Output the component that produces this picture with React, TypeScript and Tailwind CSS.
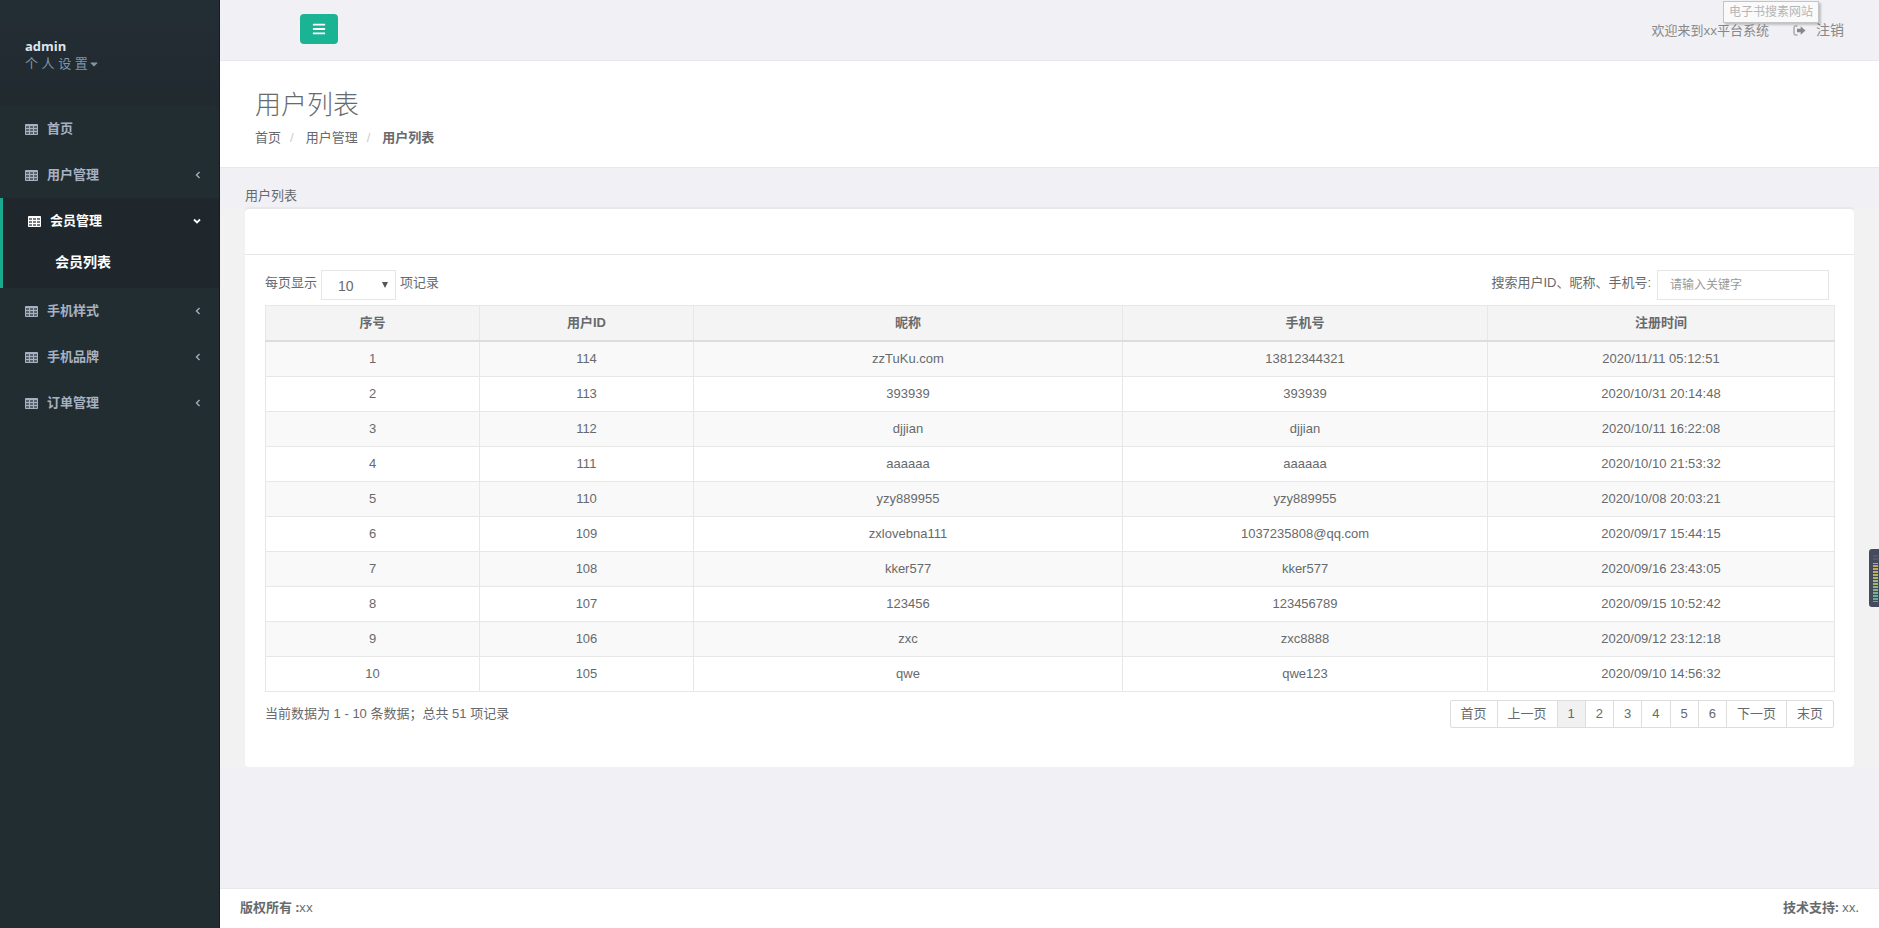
import { useState } from "react";
import { FaBars, FaCaretDown } from "react-icons/fa";

interface IMenuItem {
  name: string;
  arrow: boolean;
  children?: string[];
}

interface IUserRow {
  id: number;
  nickname: string;
  phone: string;
  created: string;
}

const menu: IMenuItem[] = [
  { name: "首页", arrow: false },
  { name: "用户管理", arrow: true },
  { name: "会员管理", arrow: true, children: ["会员列表"] },
  { name: "手机样式", arrow: true },
  { name: "手机品牌", arrow: true },
  { name: "订单管理", arrow: true },
];

const users: IUserRow[] = [
  { id: 114, nickname: "zzTuKu.com", phone: "13812344321", created: "2020/11/11 05:12:51" },
  { id: 113, nickname: "393939", phone: "393939", created: "2020/10/31 20:14:48" },
  { id: 112, nickname: "djjian", phone: "djjian", created: "2020/10/11 16:22:08" },
  { id: 111, nickname: "aaaaaa", phone: "aaaaaa", created: "2020/10/10 21:53:32" },
  { id: 110, nickname: "yzy889955", phone: "yzy889955", created: "2020/10/08 20:03:21" },
  { id: 109, nickname: "zxlovebna111", phone: "1037235808@qq.com", created: "2020/09/17 15:44:15" },
  { id: 108, nickname: "kker577", phone: "kker577", created: "2020/09/16 23:43:05" },
  { id: 107, nickname: "123456", phone: "123456789", created: "2020/09/15 10:52:42" },
  { id: 106, nickname: "zxc", phone: "zxc8888", created: "2020/09/12 23:12:18" },
  { id: 105, nickname: "qwe", phone: "qwe123", created: "2020/09/10 14:56:32" },
];

const pages = ["首页", "上一页", "1", "2", "3", "4", "5", "6", "下一页", "末页"];

const TableIcon = () => (
  <svg viewBox="0 0 13 11" className="h-[11px] w-[13px] shrink-0" fill="currentColor">
    <rect width="13" height="11" rx="1" opacity="0.4" />
    <path
      fillRule="evenodd"
      d="M1 0h11a1 1 0 0 1 1 1v9a1 1 0 0 1-1 1H1a1 1 0 0 1-1-1V1a1 1 0 0 1 1-1ZM1 2v2h3V2ZM5 2v2h3V2ZM9 2v2h3V2ZM1 5v2h3V5ZM5 5v2h3V5ZM9 5v2h3V5ZM1 8v2h3V8ZM5 8v2h3V8ZM9 8v2h3V8Z"
    />
  </svg>
);

const SignOutIcon = () => (
  <svg viewBox="0 0 13 11" className="h-[11px] w-[13px] shrink-0">
    <path d="M4.5 1H2.2A1.2 1.2 0 0 0 1 2.200V8.800A1.2 1.2 0 0 0 2.200 10H4.500" fill="none" stroke="currentColor" />
    <path d="M4 3.700h3.700V1.200L12.500 5.500 7.700 9.800V7.300H4Z" fill="currentColor" />
  </svg>
);

const Arrow = ({ open }: { open: boolean }) => (
  <svg viewBox="0 0 8 8" className="size-2 shrink-0" fill="none" stroke="currentColor" strokeWidth={open ? 1.8 : 1.3}>
    <path d={open ? "M1 2.500 4 5.500 7 2.500" : "M6.500 1 3.500 4 6.500 7"} />
  </svg>
);

const Sidebar = () => (
  <nav className="w-[220px] shrink-0 border-r border-[#141c21] bg-[#222d32] text-[#a7b1c2]">
    <div className="h-[106px] bg-linear-to-b from-[#232d34] to-[#202a2f] pt-[37px] pl-[25px]">
      <div className="font-['Open_Sans','Noto_Sans_CJK_SC',sans-serif] font-bold text-[#dfe4ed]">admin</div>
      <button type="button" className="flex cursor-pointer items-center text-[#8095a8]">
        个 人 设 置
        <FaCaretDown className="size-3" />
      </button>
    </div>
    <ul>
      {menu.map((m) => (
        <li key={m.name} className={m.children ? "border-l-3 border-[#19aa8d] bg-[#20272c] text-white" : ""}>
          <a href="#" className="flex h-[46px] items-center gap-[9px] pr-[18px] pl-[25px] font-bold">
            <TableIcon />
            <span className="flex-1">{m.name}</span>
            {m.arrow && <Arrow open={!!m.children} />}
          </a>
          {m.children && (
            <ul className="pb-2">
              {m.children.map((c) => (
                <li key={c}>
                  <a href="#" className="flex h-9 items-center pl-[52px] text-sm font-bold">
                    {c}
                  </a>
                </li>
              ))}
            </ul>
          )}
        </li>
      ))}
    </ul>
  </nav>
);

const TopBar = () => (
  <div className="relative flex h-[61px] items-start justify-between border-b border-[#e7e8ee] pr-[35px] pl-20">
    <button
      type="button"
      aria-label="menu"
      className="mt-[14px] flex h-[30px] w-[38px] cursor-pointer items-center justify-center rounded-sm bg-[#1ab394] text-white"
    >
      <FaBars className="size-[14px]" />
    </button>
    <div className="mt-[21px] flex items-center text-[#888888]">
      <span className="font-['Open_Sans','Noto_Sans_CJK_SC',sans-serif]">欢迎来到xx平台系统</span>
      <a href="#" className="ml-6 flex items-center gap-[10px] text-sm leading-[18px]">
        <SignOutIcon />
        注销
      </a>
    </div>
    <div className="absolute top-[1px] right-[60px] border border-[#c4c4c4] bg-[#fafafa] px-[5px] text-xs leading-5 text-[#b5b5b5] shadow-[2px_2px_2px_rgba(0,0,0,0.2)]">
      电子书搜素网站
    </div>
  </div>
);

const PageHeading = () => (
  <div className="border-b border-[#e7e8ee] bg-white px-[35px] pt-7 pb-5">
    <h2 className="text-[26px] leading-8 font-light">用户列表</h2>
    <ol className="mt-2 flex">
      <li>
        <a href="#">首页</a>
      </li>
      <li className="before:pr-3 before:pl-[9px] before:text-[#cccccc] before:content-['/']">
        <a href="#">用户管理</a>
      </li>
      <li className="font-bold before:pr-3 before:pl-[9px] before:font-normal before:text-[#cccccc] before:content-['/']">
        用户列表
      </li>
    </ol>
  </div>
);

const UserTable = () => (
  <table className="w-full table-fixed border-collapse border border-[#e7e7e7] text-center">
    <colgroup>
      <col className="w-[214px]" />
      <col className="w-[214px]" />
      <col className="w-[429px]" />
      <col className="w-[365px]" />
      <col className="w-[347px]" />
    </colgroup>
    <thead>
      <tr className="border-b-2 border-[#dddddd] bg-[#f4f4f4]">
        {["序号", "用户ID", "昵称", "手机号", "注册时间"].map((h) => (
          <th key={h} className="border-x border-x-[#e7e7e7] py-2 font-bold">
            {h}
          </th>
        ))}
      </tr>
    </thead>
    <tbody>
      {users.map((u, i) => (
        <tr key={u.id} className="border-b border-[#e7e7e7] odd:bg-[#f9f9f9]">
          <td className="border-x border-[#e7e7e7] py-2">{i + 1}</td>
          <td className="border-x border-[#e7e7e7] py-2">{u.id}</td>
          <td className="border-x border-[#e7e7e7] py-2">{u.nickname}</td>
          <td className="border-x border-[#e7e7e7] py-2">{u.phone}</td>
          <td className="border-x border-[#e7e7e7] py-2">{u.created}</td>
        </tr>
      ))}
    </tbody>
  </table>
);

const Pagination = () => {
  const [current, setCurrent] = useState("1");

  return (
    <div className="flex">
      {pages.map((p) => (
        <button
          key={p}
          type="button"
          onClick={() => setCurrent(p)}
          className={`-ml-px cursor-pointer border border-[#dddddd] px-[10px] py-1 first:rounded-l-xs last:rounded-r-xs ${
            current === p ? "bg-[#f1f1f1]" : "bg-white"
          }`}
        >
          {p}
        </button>
      ))}
    </div>
  );
};

const Panel = () => (
  <div className="bg-[#f2f2f3] px-[25px]">
    <div className="rounded-sm bg-white shadow-[0_-2px_1px_#e7e7eb]">
      <div className="h-[46px] border-b border-[#e7e7e9]" />
      <div className="px-5 pt-[15px] pb-[39px]">
        <div className="mb-[5px] flex items-start justify-between">
          <div className="flex">
            <label htmlFor="size" className="mt-1">
              每页显示
            </label>
            <div className="relative mx-1">
              <select
                id="size"
                defaultValue="10"
                className="h-[30px] w-[75px] appearance-none border border-[#e5e6e7] bg-white pt-[2px] pl-4 text-sm leading-5"
              >
                <option>10</option>
                <option>25</option>
                <option>50</option>
              </select>
              <svg viewBox="0 0 6 6" className="pointer-events-none absolute top-3 right-2 size-[6px]">
                <path d="M0 0h6L3 6Z" fill="#555555" />
              </svg>
            </div>
            <span className="mt-1">项记录</span>
          </div>
          <div className="flex pr-[5px]">
            <label htmlFor="keyword" className="mt-1 mr-[6px]">
              搜索用户ID、昵称、手机号:
            </label>
            <input
              id="keyword"
              type="text"
              placeholder="请输入关键字"
              className="h-[30px] w-[172px] border border-[#e5e6e7] bg-white px-3 text-xs placeholder:text-[#999999]"
            />
          </div>
        </div>
        <UserTable />
        <div className="mt-2 flex items-start justify-between">
          <p className="mt-[5px]">当前数据为 1 - 10 条数据；总共 51 项记录</p>
          <Pagination />
        </div>
      </div>
    </div>
  </div>
);

// 右侧悬浮条
const Meter = () => (
  <svg viewBox="0 0 10 58" className="fixed top-[549px] right-0 h-[58px] w-[10px]">
    <defs>
      <linearGradient id="meter" x1="0" y1="0" x2="0" y2="1">
        <stop offset="0" stopColor="#c9a35c" />
        <stop offset="0.45" stopColor="#b3b768" />
        <stop offset="1" stopColor="#4fb0a6" />
      </linearGradient>
      <pattern id="bars" width="6" height="3" patternUnits="userSpaceOnUse">
        <rect width="6" height="1" fill="#434b5d" />
      </pattern>
    </defs>
    <path d="M10 0H3a3 3 0 0 0-3 3v52a3 3 0 0 0 3 3h7Z" fill="#434b5d" />
    <path d="M4 7h5M4 10h5" stroke="#6b6672" />
    <rect x="4" y="14" width="5" height="39" fill="url(#meter)" />
    <rect x="4" y="14" width="5" height="39" fill="url(#bars)" />
  </svg>
);

export default function App() {
  return (
    <div className="flex min-h-screen bg-[#f0f0f5] font-['Liberation_Sans','Noto_Sans_CJK_SC',sans-serif] text-[13px] leading-[18px] text-[#676a6c]">
      <Sidebar />
      <main className="flex min-w-0 flex-1 flex-col">
        <TopBar />
        <PageHeading />
        <h5 className="pt-[19px] pb-1 pl-[25px]">用户列表</h5>
        <Panel />
        <footer className="mt-auto flex items-center justify-between border-t border-[#e7eaec] bg-white px-5 pt-[9px] pb-3 font-['Open_Sans','Noto_Sans_CJK_SC',sans-serif]">
          <div>
            <strong>版权所有 :</strong>xx
          </div>
          <div>
            <strong>技术支持:</strong> xx.
          </div>
        </footer>
      </main>
      <Meter />
    </div>
  );
}
